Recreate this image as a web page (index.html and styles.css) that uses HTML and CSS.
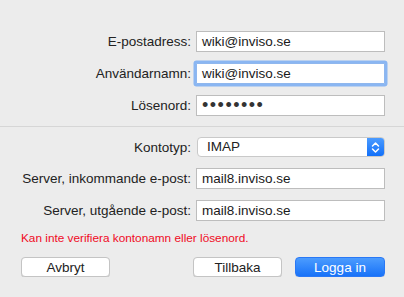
FILE: index.html
```html
<!DOCTYPE html>
<html lang="sv">
<head>
  <meta charset="UTF-8" />
  <title>Lägg till konto</title>
  <link rel="stylesheet" href="styles.css">
</head>
<body>
<div class="sheet">
  <div class="form-grid">
    <label class="lbl">E-postadress:</label>
    <div class="field">wiki@inviso.se</div>

    <label class="lbl">Användarnamn:</label>
    <div class="field focused">wiki@inviso.se</div>

    <label class="lbl">Lösenord:</label>
    <div class="field dots">••••••••</div>
  </div>

  <hr class="sep">

  <div class="form-grid">
    <label class="lbl">Kontotyp:</label>
    <div class="popup">
      <span class="popup-text">IMAP</span>
      <span class="popup-arrows">
        <svg width="9" height="13" viewBox="0 0 9 13">
          <path d="M1.5 5 L4.5 2 L7.5 5 M1.5 8 L4.5 11 L7.5 8" fill="none" stroke="#fff" stroke-width="1.5" stroke-linecap="round" stroke-linejoin="round"/>
        </svg>
      </span>
    </div>

    <label class="lbl">Server, inkommande e-post:</label>
    <div class="field">mail8.inviso.se</div>

    <label class="lbl">Server, utgående e-post:</label>
    <div class="field">mail8.inviso.se</div>
  </div>

  <p class="error">Kan inte verifiera kontonamn eller lösenord.</p>

  <div class="buttons">
    <button class="btn">Avbryt</button>
    <div class="right">
      <button class="btn">Tillbaka</button>
      <button class="btn primary">Logga in</button>
    </div>
  </div>
</div>
</body>
</html>
```

FILE: styles.css
```css
body {
  margin: 0;
  background-color: #ececec;
  font-family: "Liberation Sans", Arial, sans-serif;
  font-size: 13.5px;
  color: #222;
}
.sheet {
  padding: 31px 19px 0 21px;
}
.form-grid {
  display: grid;
  grid-template-columns: 170px 189px;
  column-gap: 5px;
  row-gap: 11px;
  align-items: center;
}
.lbl {
  text-align: right;
  white-space: nowrap;
}
.field {
  height: 21px;
  box-sizing: border-box;
  background: #fff;
  border: 1px solid #bdbdbd;
  padding: 0 5px;
  line-height: 19px;
  color: #1a1a1a;
}
.field.focused {
  border-color: #8fb7ee;
  box-shadow: 0 0 0 2.5px #8ab6f2;
  border-radius: 1px;
}
.field.dots {
  font-size: 18px;
  letter-spacing: 1.5px;
  color: #333;
}
.sep {
  border: none;
  border-top: 1px solid #d6d6d6;
  margin: 10px -19px 10px -21px;
}
.popup {
  height: 20px;
  box-sizing: border-box;
  margin-left: 1px;
  background: #fff;
  border: 1px solid #c9c9c9;
  border-radius: 4px;
  display: flex;
  align-items: stretch;
  overflow: hidden;
}
.popup-text {
  flex: 1;
  padding-left: 9px;
  line-height: 18px;
}
.popup-arrows {
  width: 17px;
  background: linear-gradient(#4b9bff, #1270f9);
  display: flex;
  align-items: center;
  justify-content: center;
}
.error {
  margin: 10px 0 0 0;
  color: #f00a1e;
  font-size: 11.8px;
  line-height: 14px;
}
.buttons {
  display: flex;
  justify-content: space-between;
  margin-top: 12px;
}
.right {
  display: flex;
  gap: 13px;
}
.btn {
  width: 89px;
  height: 20px;
  padding: 0;
  font-family: inherit;
  font-size: 13.5px;
  color: #222;
  background: #fff;
  border: 1px solid #c4c4c4;
  border-radius: 4px;
  box-shadow: 0 0.5px 0.5px rgba(0,0,0,0.15);
}
.btn.primary {
  width: 90px;
  color: #fff;
  border-color: #2a78f5;
  background: linear-gradient(#4c9cfe, #1872f8);
}
```
